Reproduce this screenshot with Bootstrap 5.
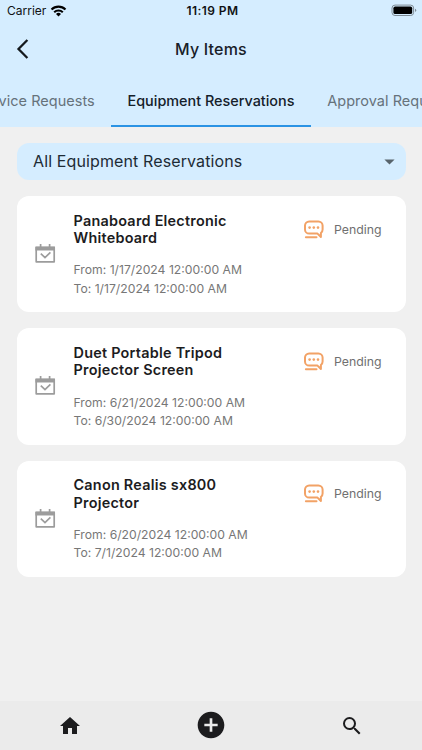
<!DOCTYPE html>
<html lang="en">
<head>
<meta charset="utf-8">
<meta name="viewport" content="width=device-width, initial-scale=1">
<title>My Items</title>
<link rel="stylesheet" href="https://cdn.jsdelivr.net/npm/bootstrap@5.3.0/dist/css/bootstrap.min.css">
<style>
body{font-family:Inter,"Liberation Sans",sans-serif;background:#f0f0f0;color:#1c1c1e;height:750px}
.app-head{background:#d5edff;height:126.5px}
.status-bar{height:22px;font-size:12px;line-height:22px;color:#101214}
.status-bar>*{flex:1 1 0}
.carrier{padding-left:7px}
.clock{font-size:12px;letter-spacing:.4px}
.title-bar{height:54px;padding:0 16px}
.title-bar h1{font-size:16px;letter-spacing:.2px;padding-top:2px;color:#182028}
.side{width:14px}
.tabs{height:50.5px;font-size:14.5px}
.tab-item{flex:none;width:160px;height:50.5px;line-height:49px;padding:0 16.5px;color:#66727b;letter-spacing:.02px;white-space:nowrap}
.tab-item.active{width:199.5px;padding:0;letter-spacing:0;color:#14202a;font-size:14.4px;border-bottom:2px solid #2b93e4}
.page{padding:16.5px 16.5px 0}
.filter{background:#d5edff;border-radius:12px;height:37px;padding:0 11px 0 16.5px;font-size:16px;letter-spacing:.12px;line-height:22px;color:#1d2b35}
.filter span{padding-bottom:2px}
.item{border-radius:12px;height:116.3px;margin-top:16px;padding:15.6px 24px 0 17px}
.item h2{font-size:14.4px;line-height:17.5px;font-weight:600;letter-spacing:.25px;margin:0 0 14.7px;width:190px}
.dates{font-size:12.2px;line-height:18.4px;color:#777}
.cal{margin-right:17px;margin-top:30.5px;width:23px}
.state{height:36.500px;font-size:12.3px;color:#707070}
.state svg{margin-right:9px}
.bottom-bar{background:#ebebeb;height:49px;padding-bottom:1px;color:#1c1c1e}
</style>
<script src="https://cdn.jsdelivr.net/npm/bootstrap@5.3.0/dist/js/bootstrap.bundle.min.js"></script>
</head>
<body class="d-flex flex-column overflow-hidden">
<svg width="0" height="0" class="d-none">
  <symbol id="calendar" viewBox="0 0 23 23"><path d="M2.200 5.500h18v14.300h-18z" fill="none" stroke="#9c9c9c" stroke-width="1.7" stroke-linejoin="round"/><path d="M1.400 4.500h19.600v4H1.400z" fill="#9c9c9c"/><path d="M6.600 1.900v4M15.600 1.900v4M6.800 11.600l4.200 4 5.400-5.200" fill="none" stroke="#9c9c9c" stroke-width="1.7"/></symbol>
  <symbol id="chat" viewBox="0 0 22 22"><g fill="none" stroke="#f2a266" stroke-width="2" stroke-linejoin="round" stroke-linecap="round"><path d="M17.900 18 14.500 14.600H6.200A4.200 4.200 0 0 1 2 10.400V6.600a4.200 4.200 0 0 1 4.200-4.200h9.200a4.200 4.200 0 0 1 4.200 4.200v3.800c0 1.500-.7 2.800-1.700 3.600z"/><path d="M2.900 18.200h10.600"/></g><g fill="#f2a266"><circle cx="6.600" cy="8.600" r="1.300"/><circle cx="10.800" cy="8.600" r="1.300"/><circle cx="15" cy="8.600" r="1.300"/></g></symbol>
</svg>
<header class="app-head flex-shrink-0">
  <div class="status-bar d-flex">
    <div class="carrier d-flex align-items-center">Carrier
      <svg class="ms-1" width="17" height="14" viewBox="0 0 17 14"><g fill="none" stroke="#000" stroke-width="2.1"><path d="M1.500 5.500a10 10 0 0 1 14 0M4.200 8.300a6.200 6.200 0 0 1 8.600 0"/></g><path d="M8.500 12.400 6 9.900a3.600 3.600 0 0 1 5 0z"/></svg>
    </div>
    <div class="clock fw-semibold text-center">11:19 PM</div>
    <div class="d-flex align-items-center justify-content-end pe-1">
      <svg width="27" height="14" viewBox="0 0 27 14"><rect x="1" y="1.100" width="21.600" height="10.400" rx="3" fill="none" stroke="#7e8b95"/><rect x="2.400" y="2.500" width="18.800" height="7.600" rx="1.700"/><path d="M24 4.700v3.200q1.200-.4 1.200-1.600T24 4.700" fill="#7e8b95"/></svg>
    </div>
  </div>
  <div class="title-bar d-flex align-items-center justify-content-between">
    <svg class="side" height="22" viewBox="0 0 14 22"><path d="M11.400 2 2.500 11l8.900 9" fill="none" stroke="#14191d" stroke-width="2.300"/></svg>
    <h1 class="m-0 fw-medium">My Items</h1>
    <span class="side"></span>
  </div>
  <nav class="tabs d-flex justify-content-center overflow-hidden">
    <div class="tab-item d-flex justify-content-end">Service Requests</div>
    <div class="tab-item active fw-medium text-center">Equipment Reservations</div>
    <div class="tab-item">Approval Requests</div>
  </nav>
</header>
<main class="page flex-grow-1">
  <div class="filter d-flex align-items-center justify-content-between"><span>All Equipment Reservations</span><svg width="11" height="6" viewBox="0 0 11 6"><path d="M.4.4h10.200L5.500 5.500z" fill="#58646c"/></svg></div>
  <section class="item bg-white d-flex">
    <svg class="cal flex-shrink-0" height="23"><use href="#calendar"/></svg>
    <div class="flex-grow-1"><h2>Panaboard Electronic Whiteboard</h2><div class="dates">From: 1/17/2024 12:00:00 AM<br>To: 1/17/2024 12:00:00 AM</div></div>
    <div class="state d-flex align-items-center"><svg width="22" height="22"><use href="#chat"/></svg><span>Pending</span></div>
  </section>
  <section class="item bg-white d-flex">
    <svg class="cal flex-shrink-0" height="23"><use href="#calendar"/></svg>
    <div class="flex-grow-1"><h2>Duet Portable Tripod Projector Screen</h2><div class="dates">From: 6/21/2024 12:00:00 AM<br>To: 6/30/2024 12:00:00 AM</div></div>
    <div class="state d-flex align-items-center"><svg width="22" height="22"><use href="#chat"/></svg><span>Pending</span></div>
  </section>
  <section class="item bg-white d-flex">
    <svg class="cal flex-shrink-0" height="23"><use href="#calendar"/></svg>
    <div class="flex-grow-1"><h2>Canon Realis sx800 Projector</h2><div class="dates">From: 6/20/2024 12:00:00 AM<br>To: 7/1/2024 12:00:00 AM</div></div>
    <div class="state d-flex align-items-center"><svg width="22" height="22"><use href="#chat"/></svg><span>Pending</span></div>
  </section>
</main>
<footer class="bottom-bar d-flex flex-shrink-0 align-items-center">
  <div class="col-4 text-center"><svg width="24" height="24" viewBox="0 0 24 24" fill="currentColor"><path d="M10 20v-6h4v6h5v-8h3L12 3 2 12h3v8z"/></svg></div>
  <div class="col-4 text-center"><svg width="32" height="32" viewBox="0 0 24 24" fill="currentColor"><path d="M12 2C6.480 2 2 6.480 2 12s4.480 10 10 10 10-4.480 10-10S17.520 2 12 2zm5 11h-4v4h-2v-4H7v-2h4V7h2v4h4v2z"/></svg></div>
  <div class="col-4 text-center"><svg width="24" height="24" viewBox="0 0 24 24" fill="currentColor"><path d="M15.500 14h-.79l-.28-.27A6.470 6.470 0 0 0 16 9.500 6.500 6.500 0 1 0 9.500 16c1.610 0 3.090-.59 4.230-1.570l.27.28v.79l5 4.990L20.490 19l-4.990-5zm-6 0C7.010 14 5 11.990 5 9.500S7.010 5 9.500 5 14 7.010 14 9.500 11.990 14 9.500 14z"/></svg></div>
</footer>
</body>
</html>
